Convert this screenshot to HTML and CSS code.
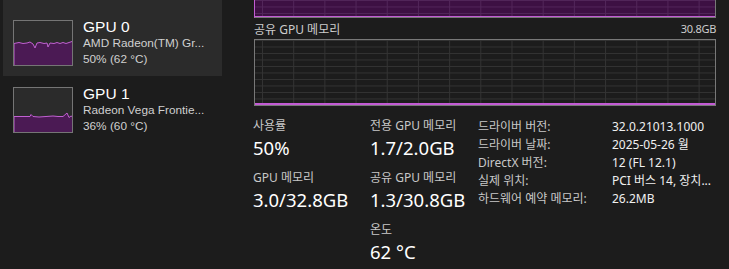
FILE: index.html
```html
<!DOCTYPE html>
<html lang="ko">
<head>
  <meta charset="UTF-8">
  <meta name="viewport" content="width=device-width, initial-scale=1.0">
  <title>GPU - 작업 관리자</title>
  <link rel="stylesheet" href="styles.css">
</head>
<body>
  <div class="window">

    <aside class="sidebar">
      <div class="device selected">
        <svg class="thumb" width="60" height="46" viewBox="0 0 60 46">
          <rect x="0.5" y="0.5" width="59" height="45" class="thumb-bg"/>
          <path class="thumb-fill" d="M1 45 L1 23.5 L6 22.5 L10 23.5 L14 23 L17 22 L20 24 L22 28 L24 23 L27 22.5 L31 23.5 L34 23 L35 27 L37 23 L41 23.5 L44 22.5 L47 23.5 L50 22.5 L53 23.5 L56 22.5 L59 21.5 L59 45 Z"/>
          <path class="thumb-line" d="M1 45 L1 23.5 L6 22.5 L10 23.5 L14 23 L17 22 L20 24 L22 28 L24 23 L27 22.5 L31 23.5 L34 23 L35 27 L37 23 L41 23.5 L44 22.5 L47 23.5 L50 22.5 L53 23.5 L56 22.5 L59 21.5"/>
          <rect x="0.5" y="0.5" width="59" height="45" class="thumb-border"/>
        </svg>
        <div class="device-info">
          <div class="device-name">GPU 0</div>
          <div class="device-sub">AMD Radeon(TM) Gr...</div>
          <div class="device-sub">50% (62 °C)</div>
        </div>
      </div>

      <div class="device">
        <svg class="thumb" width="60" height="46" viewBox="0 0 60 46">
          <rect x="0.5" y="0.5" width="59" height="45" class="thumb-bg"/>
          <path class="thumb-fill" d="M1 45 L1 29.5 L17 29.5 L18 27.5 L20 29.5 L26 30 L33 29.5 L40 29 L45 29.5 L50 29.5 L54 26 L56 30.5 L58 29 L59 29.5 L59 45 Z"/>
          <path class="thumb-line" d="M1 45 L1 29.5 L17 29.5 L18 27.5 L20 29.5 L26 30 L33 29.5 L40 29 L45 29.5 L50 29.5 L54 26 L56 30.5 L58 29 L59 29.5"/>
          <rect x="0.5" y="0.5" width="59" height="45" class="thumb-border"/>
        </svg>
        <div class="device-info">
          <div class="device-name">GPU 1</div>
          <div class="device-sub">Radeon Vega Frontie...</div>
          <div class="device-sub">36% (60 °C)</div>
        </div>
      </div>
    </aside>

    <main class="detail">
      <!-- 전용 GPU 메모리 그래프 (위로 스크롤된 상태) -->
      <div class="graph graph-dedicated"></div>

      <div class="graph-head">
        <span>공유 GPU 메모리</span>
        <span class="graph-max">30.8GB</span>
      </div>
      <div class="graph graph-shared"></div>

      <div class="stats">
        <div class="stat-col col-1">
          <div class="stat">
            <div class="stat-label">사용률</div>
            <div class="stat-value">50%</div>
          </div>
          <div class="stat">
            <div class="stat-label">GPU 메모리</div>
            <div class="stat-value">3.0/32.8GB</div>
          </div>
        </div>

        <div class="stat-col col-2">
          <div class="stat">
            <div class="stat-label">전용 GPU 메모리</div>
            <div class="stat-value">1.7/2.0GB</div>
          </div>
          <div class="stat">
            <div class="stat-label">공유 GPU 메모리</div>
            <div class="stat-value">1.3/30.8GB</div>
          </div>
          <div class="stat">
            <div class="stat-label">온도</div>
            <div class="stat-value">62 °C</div>
          </div>
        </div>

        <div class="props">
          <div class="prop"><span class="prop-key">드라이버 버전:</span><span class="prop-val">32.0.21013.1000</span></div>
          <div class="prop"><span class="prop-key">드라이버 날짜:</span><span class="prop-val">2025-05-26 월</span></div>
          <div class="prop"><span class="prop-key">DirectX 버전:</span><span class="prop-val">12 (FL 12.1)</span></div>
          <div class="prop"><span class="prop-key">실제 위치:</span><span class="prop-val">PCI 버스 14, 장치...</span></div>
          <div class="prop"><span class="prop-key">하드웨어 예약 메모리:</span><span class="prop-val">26.2MB</span></div>
        </div>
      </div>
    </main>

  </div>
</body>
</html>
```

FILE: styles.css
```css
    * {
      box-sizing: border-box;
    }
    body {
      margin: 0;
      background: #1c1c1c;
      color: #ffffff;
      font-family: 'Noto Sans', 'Noto Sans CJK KR', sans-serif;
      overflow: hidden;
    }
    .window {
      display: flex;
      height: 269px;
    }

    /* 왼쪽 장치 목록 */
    .sidebar {
      width: 240px;
      padding-left: 3px;
      flex-shrink: 0;
    }
    .device {
      display: flex;
      align-items: flex-start;
      gap: 10px;
      width: 219px;
      padding: 9px 10px 9px;
    }
    .device:first-child {
      padding-top: 18px;
    }
    .device.selected {
      background: #2b2b2b;
    }
    .thumb {
      display: block;
      margin-top: 2px;
      flex-shrink: 0;
    }
    .thumb-bg {
      fill: #2b2b2b;
    }
    .thumb-fill {
      fill: #4b1a54;
    }
    .thumb-line {
      fill: none;
      stroke: #c160d2;
      stroke-width: 1;
    }
    .thumb-border {
      fill: none;
      stroke: #757575;
    }
    .device-info {
      white-space: nowrap;
      font-family: 'Liberation Sans', Arial, sans-serif;
    }
    .device-name {
      font-size: 15.5px;
      line-height: 17px;
      color: #ffffff;
    }
    .device-sub {
      font-size: 11.8px;
      line-height: 16px;
      color: #d0d0d0;
    }

    /* 오른쪽 상세 */
    .detail {
      flex: 1;
      padding: 0 13px 0 14px;
    }
    .graph {
      width: 462px;
      border: 1px solid #787878;
      background-image:
        linear-gradient(to right, var(--grid) 1px, transparent 1px),
        linear-gradient(to bottom, var(--grid) 1px, transparent 1px);
      background-size: 31.2px 100%, 100% 6.5px;
      background-position: 7px 0, 0 6.5px;
    }
    .graph-dedicated {
      --grid: #52265a;
      height: 18px;
      border-top: none;
      border-left-color: #c25bd4;
      background-color: #3d1043;
      box-shadow: inset 0 -1px 0 #c25bd4;
    }
    .graph-shared {
      --grid: #333333;
      height: 67px;
      background-color: #1c1c1c;
      box-shadow: inset 0 -2px 0 #c25bd4;
    }
    .graph-head {
      display: flex;
      justify-content: space-between;
      align-items: center;
      width: 462px;
      height: 21px;
      font-size: 12px;
      color: #cccccc;
    }
    .graph-max {
      font-size: 11px;
      letter-spacing: -0.3px;
    }

    .stats {
      display: flex;
      padding-top: 12px;
      margin-left: -1px;
    }
    .stat-col {
      display: flex;
      flex-direction: column;
      gap: 8px;
    }
    .col-1 {
      width: 117px;
    }
    .col-2 {
      width: 108px;
    }
    .stat-label {
      font-size: 12px;
      line-height: 16px;
      color: #c8c8c8;
    }
    .stat-value {
      font-size: 18.5px;
      line-height: 28px;
      color: #ffffff;
      white-space: nowrap;
    }

    .props {
      display: flex;
      flex-direction: column;
      font-size: 12px;
      line-height: 18px;
    }
    .prop {
      display: flex;
      white-space: nowrap;
    }
    .prop-key {
      width: 134px;
      color: #c8c8c8;
    }
    .prop-val {
      color: #f0f0f0;
    }
```
